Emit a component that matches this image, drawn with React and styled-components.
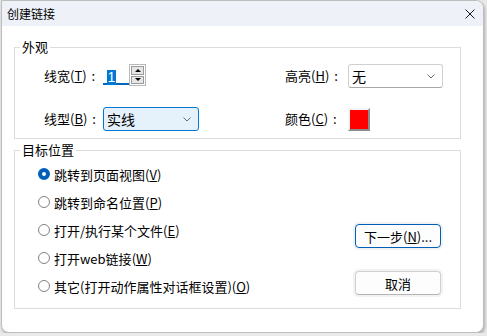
import React from 'react';
import styled, { createGlobalStyle } from 'styled-components';

const GlobalStyle = createGlobalStyle`
  html, body {
    margin: 0;
    background: #e9e9e9;
  }
  body {
    font-family: "Noto Sans CJK SC", "Microsoft YaHei", sans-serif;
    font-size: 13px;
    color: #000;
  }
`;

const Window = styled.div`
  margin-left: 1px;
  width: 483px;
  height: 333px;
  box-sizing: border-box;
  background: #fff;
  border: 1px solid #bdbdbd;
  border-radius: 0 8px 8px 8px;
  box-shadow: 1px 2px 3px rgba(0, 0, 0, 0.25);
  overflow: hidden;
  display: flex;
  flex-direction: column;
`;

const TitleBar = styled.div`
  height: 25px;
  flex: none;
  background: #eef2f8;
  display: flex;
  align-items: center;
  justify-content: space-between;
  padding: 0 8px 0 5px;
  font-size: 12px;
`;

const CloseIcon = styled.svg`
  width: 10px;
  height: 10px;
  display: block;
`;

const Body = styled.div`
  padding: 12px 22px 0 12px;
  display: flex;
  flex-direction: column;
  gap: 2px;
`;

const Group = styled.fieldset`
  margin: 0;
  padding: 0;
  border: 1px solid #dcdcdc;
  min-width: 0;
`;

const Legend = styled.legend`
  margin-left: 5px;
  padding: 0 2px;
  font-size: 13px;
  line-height: 18px;
`;

const AppearanceGrid = styled.div`
  display: grid;
  grid-template-columns: 59px 182px 63px 95px;
  grid-auto-rows: 24px;
  row-gap: 19px;
  align-items: center;
  padding: 8px 16px 7px 29px;
`;

const Label = styled.span`
  white-space: nowrap;
  line-height: 18px;
`;

const Colon = styled.span`
  margin-left: 5px;
`;

const SpinBox = styled.div`
  display: flex;
  align-items: flex-start;
  height: 24px;
`;

const SpinInput = styled.div`
  width: 26px;
  height: 21px;
  box-sizing: border-box;
  border-bottom: 2px solid #0067c0;
  padding: 3px 0 0 4px;
`;

const Selected = styled.span`
  display: inline-block;
  background: #0078d7;
  color: #fff;
  font-family: "Liberation Sans", Arial, sans-serif;
  font-size: 14px;
  line-height: 15px;
  padding: 0 0.5px;
`;

const SpinButtons = styled.div`
  width: 17px;
  height: 22px;
  box-sizing: border-box;
  border: 1px solid #b8b8b8;
  display: flex;
  flex-direction: column;
  gap: 1px;
  padding: 1px;
  background: #fff;
`;

const SpinButton = styled.div`
  flex: 1;
  background: #e5e5e5;
  border: 1px solid #9a9a9a;
  display: flex;
  align-items: center;
  justify-content: center;

  &::before {
    content: '';
    border-left: 3px solid transparent;
    border-right: 3px solid transparent;
    ${p => (p.$down ? 'border-top: 3px solid #000;' : 'border-bottom: 3px solid #000;')}
  }
`;

const Combo = styled.div`
  width: ${p => p.$width}px;
  height: 24px;
  box-sizing: border-box;
  border: 1px solid ${p => (p.$focused ? '#0078d4' : '#d0d0d0')};
  border-bottom-color: ${p => (p.$focused ? '#0078d4' : '#a8a8a8')};
  background: ${p => (p.$focused ? '#e5f1fb' : '#fff')};
  border-radius: 3px;
  display: flex;
  align-items: center;
  justify-content: space-between;
  padding: 0 7px 0 3px;
  font-size: 14px;
`;

const Chevron = styled.svg`
  width: 8px;
  height: 5px;
  display: block;
`;

const Swatch = styled.div`
  width: 22px;
  height: 23px;
  box-sizing: border-box;
  background: #ff0000;
  border: 2px solid;
  border-color: #f4f4f4 #8c8c8c #8c8c8c #f4f4f4;
`;

const TargetGrid = styled.div`
  display: grid;
  grid-template-columns: 1fr auto;
  padding: 0 19px 12px 23px;
`;

const RadioList = styled.div`
  display: flex;
  flex-direction: column;
  gap: 8px;
  padding-top: 5px;
`;

const RadioRow = styled.label`
  height: 20px;
  display: flex;
  align-items: center;
  gap: 4px;
  white-space: nowrap;
`;

const RadioDot = styled.span`
  width: 12px;
  height: 12px;
  box-sizing: border-box;
  border-radius: 50%;
  flex: none;
  border: ${p => (p.$checked ? '4px solid #005fb8' : '1px solid #808080')};
  background: #fff;
`;

const ButtonColumn = styled.div`
  display: flex;
  flex-direction: column;
  justify-content: flex-end;
  gap: 23px;
  padding-bottom: 1px;
`;

const Button = styled.button`
  width: 86px;
  height: 24px;
  box-sizing: border-box;
  font: inherit;
  font-size: 13px;
  color: #000;
  padding: 0;
  background: #fdfdfd;
  border: 1px solid ${p => (p.$primary ? '#005fb8' : '#d0d0d0')};
  border-bottom-color: ${p => (p.$primary ? '#005fb8' : '#b5b5b5')};
  border-radius: 4px;
  box-shadow: 0 0 0 2px #f2f2f2;
`;

const options = [
  { text: '跳转到页面视图', key: 'V', checked: true },
  { text: '跳转到命名位置', key: 'P' },
  { text: '打开/执行某个文件', key: 'E' },
  { text: '打开web链接', key: 'W' },
  { text: '其它(打开动作属性对话框设置)', key: 'O' },
];

function ComboChevron() {
  return (
    <Chevron viewBox="0 0 8 5">
      <path d="M0.5 0.5 L4 4 L7.5 0.5" fill="none" stroke="#6b6b6b" strokeWidth="1" />
    </Chevron>
  );
}

export default function App() {
  return (
    <>
      <GlobalStyle />
      <Window>
        <TitleBar>
          <span>创建链接</span>
          <CloseIcon viewBox="0 0 10 10">
            <path d="M0.5 0.5 L9.5 9.5 M9.5 0.5 L0.5 9.5" stroke="#1a1a1a" strokeWidth="1" />
          </CloseIcon>
        </TitleBar>
        <Body>
          <Group>
            <Legend>外观</Legend>
            <AppearanceGrid>
              <Label>
                线宽(<u>T</u>)<Colon>:</Colon>
              </Label>
              <SpinBox>
                <SpinInput>
                  <Selected>1</Selected>
                </SpinInput>
                <SpinButtons>
                  <SpinButton />
                  <SpinButton $down />
                </SpinButtons>
              </SpinBox>
              <Label>
                高亮(<u>H</u>)<Colon>:</Colon>
              </Label>
              <Combo $width={95}>
                <span>无</span>
                <ComboChevron />
              </Combo>
              <Label>
                线型(<u>B</u>)<Colon>:</Colon>
              </Label>
              <Combo $width={96} $focused>
                <span>实线</span>
                <ComboChevron />
              </Combo>
              <Label>
                颜色(<u>C</u>)<Colon>:</Colon>
              </Label>
              <Swatch />
            </AppearanceGrid>
          </Group>
          <Group>
            <Legend>目标位置</Legend>
            <TargetGrid>
              <RadioList>
                {options.map(o => (
                  <RadioRow key={o.key}>
                    <RadioDot $checked={o.checked} />
                    <span>
                      {o.text}(<u>{o.key}</u>)
                    </span>
                  </RadioRow>
                ))}
              </RadioList>
              <ButtonColumn>
                <Button $primary>
                  下一步(<u>N</u>)...
                </Button>
                <Button>取消</Button>
              </ButtonColumn>
            </TargetGrid>
          </Group>
        </Body>
      </Window>
    </>
  );
}
